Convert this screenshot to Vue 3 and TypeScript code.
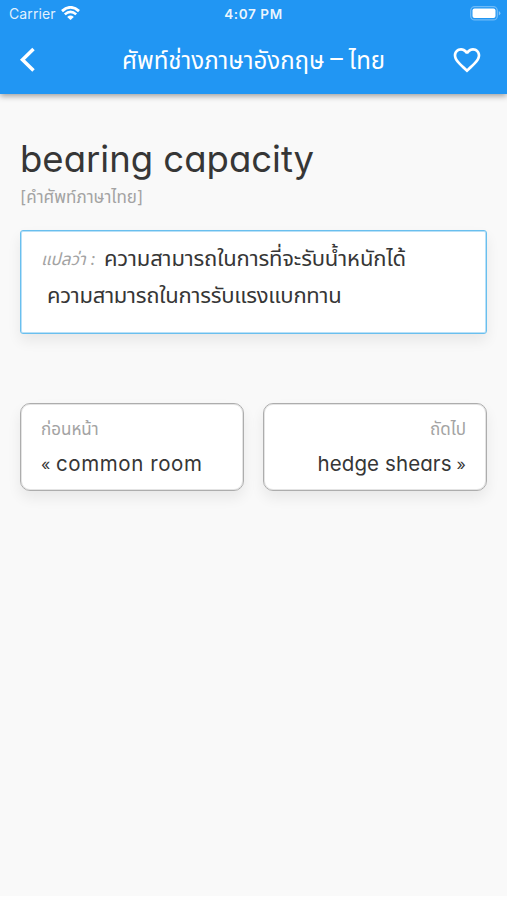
<script setup lang="ts">
interface Neighbour {
  side: 'previous' | 'next'
  label: string
  mark: string
  word: string
}

const title = ['ศัพท์ช่างภาษาอังกฤษ', '–', 'ไทย']
const word = 'bearing capacity'
const category = '[คำศัพท์ภาษาไทย]'
const meanings: string[] = ['ความสามารถในการที่จะรับน้ำหนักได้', 'ความสามารถในการรับแรงแบกทาน']
const neighbours: Neighbour[] = [
  { side: 'previous', label: 'ก่อนหน้า', mark: '«', word: 'common room' },
  { side: 'next', label: 'ถัดไป', mark: '»', word: 'hedge shears' },
]
</script>

<template>
  <div class="screen">
    <header class="header">
      <div class="status">
        <div class="carrier">
          <span>Carrier</span>
          <svg width="19" height="15" viewBox="0 0 19 15" fill="none" stroke="#fff">
            <path d="M1 5.1Q9.5-2.4 18 5.1" stroke-width="2.8" />
            <path d="M3.8 8.4Q9.5 3.2 15.2 8.4" stroke-width="2.6" />
            <path d="M9.5 14L6.2 10.9Q9.5 8 12.8 10.9Z" fill="#fff" stroke="none" />
          </svg>
        </div>
        <span class="time">4:07 PM</span>
        <svg class="battery" width="31" height="15" viewBox="0 0 31 15">
          <rect x=".7" y=".7" width="26.6" height="13.2" rx="4" fill="none" stroke="#fff" stroke-opacity=".35" stroke-width="1.3" />
          <rect x="2.5" y="2.5" width="23" height="9.6" rx="2" fill="#fff" />
          <path d="M28.8 5v4.6q1.6-.8 1.6-2.3T28.8 5Z" fill="#fff" fill-opacity=".45" />
        </svg>
      </div>
      <div class="bar">
        <svg class="back" width="18" height="26" viewBox="0 0 18 26" fill="none" stroke="#fff" stroke-width="3.5">
          <path d="M15.5 2L4.5 12.7L15.5 23.4" />
        </svg>
        <h1 class="title">
          <span>{{ title[0] }}</span>
          <span class="dash">{{ title[1] }}</span>
          <span>{{ title[2] }}</span>
        </h1>
        <svg class="heart" width="32" height="32" viewBox="0 0 24 24" fill="#fff">
          <path d="M16.5 3c-1.74 0-3.41.81-4.5 2.09C10.91 3.81 9.24 3 7.5 3 4.42 3 2 5.42 2 8.5c0 3.78 3.4 6.86 8.55 11.54L12 21.35l1.45-1.32C18.6 15.36 22 12.28 22 8.5 22 5.42 19.58 3 16.5 3zm-4.4 15.55l-.1.1-.1-.1C7.14 14.24 4 11.39 4 8.5 4 6.5 5.5 5 7.5 5c1.54 0 3.04.99 3.57 2.36h1.87C13.46 5.99 14.96 5 16.5 5c2 0 3.5 1.5 3.5 3.5 0 2.89-3.14 5.74-7.9 10.05z" />
        </svg>
      </div>
    </header>
    <main class="content">
      <h2 class="word">{{ word }}</h2>
      <p class="category">{{ category }}</p>
      <section class="meaning">
        <div class="line">
          <span class="prefix">แปลว่า :</span>
          <span class="first">{{ meanings[0] }}</span>
        </div>
        <div class="line second">{{ meanings[1] }}</div>
      </section>
      <nav class="neighbours">
        <div v-for="item in neighbours" :key="item.side" class="card" :class="item.side">
          <span class="label">{{ item.label }}</span>
          <span class="link">
            <span class="mark">{{ item.mark }}</span>
            <span>{{ item.word }}</span>
          </span>
        </div>
      </nav>
    </main>
  </div>
</template>

<style>
body {
  background: #fefefe;
}
</style>

<style scoped>
.screen {
  box-sizing: border-box;
  height: 900px;
  overflow: hidden;
  border-bottom: 4px solid #fefefe;
  background: #f9f9f9;
  color: #363636;
  font-family: Inter, 'Noto Sans Thai', 'Noto Sans', sans-serif;
  font-feature-settings: 'cv11';
}
.header {
  box-sizing: border-box;
  height: 94px;
  color: #fff;
  background: #2196f3;
  box-shadow: 0 2px 6px rgba(0, 0, 0, 0.38);
}
.status {
  display: grid;
  grid-template-columns: 1fr auto 1fr;
  align-items: center;
  height: 27px;
  padding: 0 6px 0 9px;
  font-size: 14px;
  font-feature-settings: normal;
}
.carrier {
  display: flex;
  align-items: center;
  gap: 5px;
  letter-spacing: 0.1px;
  color: rgba(255, 255, 255, 0.88);
}
.time {
  margin-right: 3px;
  font-size: 13.5px;
  font-weight: 600;
  letter-spacing: 0.6px;
  color: rgba(255, 255, 255, 0.92);
}
.battery {
  justify-self: end;
}
.bar {
  display: grid;
  grid-template-columns: 35px 1fr 35px;
  align-items: center;
  height: 65px;
  padding: 0 21px 0 18px;
}
.title {
  display: flex;
  justify-content: center;
  gap: 6px;
  margin: 2px 0 0 3px;
  font-size: 24px;
  font-weight: 400;
  line-height: 36px;
  white-space: nowrap;
}
.dash {
  font-size: 25px;
  line-height: 31px;
}
.content {
  padding: 42px 20px 0;
}
.word {
  margin: 0;
  font-size: 36.5px;
  font-weight: 400;
  line-height: 46px;
  white-space: nowrap;
}
.category {
  margin: 0;
  height: 31px;
  font-size: 17px;
  line-height: 30px;
  color: #a3a3a3;
}
.meaning {
  box-sizing: border-box;
  height: 104px;
  margin-top: 17px;
  padding: 10px 20px;
  border: 1px solid #69bfee;
  border-radius: 3px;
  background: #fff;
  box-shadow: 0 7px 14px rgba(0, 0, 0, 0.07), inset 0 0 0 1px #b9e0f7;
}
.line {
  display: flex;
  align-items: center;
  height: 37px;
  font-size: 22px;
  white-space: nowrap;
}
.first {
  letter-spacing: -0.15px;
}
.prefix {
  width: 63px;
  font-size: 17px;
  font-style: italic;
  color: #a3a3a3;
}
.second {
  padding-left: 6px;
  letter-spacing: -0.24px;
}
.neighbours {
  display: grid;
  grid-template-columns: 1fr 1fr;
  gap: 19px;
  margin-top: 69px;
}
.card {
  display: flex;
  flex-direction: column;
  box-sizing: border-box;
  height: 88px;
  padding: 9px 20px;
  border: 1px solid #adadad;
  border-radius: 10px;
  background: #fff;
  box-shadow: 0 7px 14px rgba(0, 0, 0, 0.07), inset 0 0 0 1px #e4e4e4;
  white-space: nowrap;
}
.next {
  align-items: flex-end;
}
.label {
  font-size: 17px;
  line-height: 32px;
  color: #a3a3a3;
}
.link {
  display: flex;
  gap: 5px;
  font-size: 20.5px;
  line-height: 38px;
}
.mark {
  font-size: 16px;
}
.previous .link {
  letter-spacing: 0.6px;
}
.next .link {
  flex-direction: row-reverse;
  letter-spacing: 0.1px;
}
</style>
